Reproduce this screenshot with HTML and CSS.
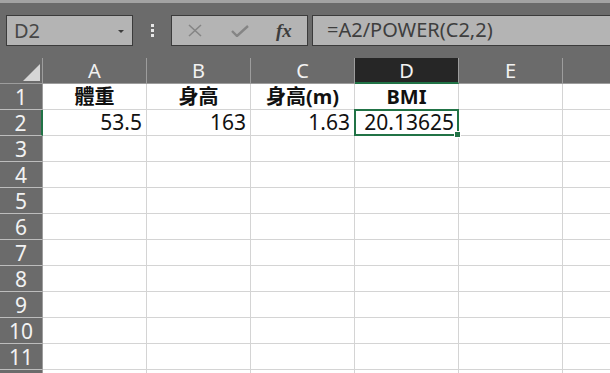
FILE: index.html
```html
<!DOCTYPE html>
<html lang="zh-Hant">
<head>
    <title>體重 BMI</title>
    <meta charset="utf-8">
    <meta name="viewport" content="width=device-width, initial-scale=1">
    <link rel="stylesheet" href="styles.css">
</head>
<body>
    <div class="toolbar">
        <div class="name-box">
            <span class="cell-ref">D2</span>
            <span class="drop-arrow"></span>
        </div>
        <div class="grip">
            <span></span><span></span><span></span>
        </div>
        <div class="fx-box">
            <svg class="tool-icon" width="14" height="13" viewBox="0 0 14 13">
                <path d="M1 1 L13 12 M13 1 L1 12" stroke="#858585" stroke-width="1.6" fill="none"/>
            </svg>
            <svg class="tool-icon" width="18" height="12" viewBox="0 0 18 12">
                <path d="M1 6 L6 11 L17 1" stroke="#858585" stroke-width="2.4" fill="none"/>
            </svg>
            <span class="fx">fx</span>
        </div>
        <div class="formula-bar">=A2/POWER(C2,2)</div>
    </div>

    <div class="sheet">
        <div class="corner"><span class="corner-mark"></span></div>
        <div class="col-head">A</div>
        <div class="col-head">B</div>
        <div class="col-head">C</div>
        <div class="col-head active">D</div>
        <div class="col-head">E</div>
        <div class="col-head last"></div>

        <div class="row-head">1</div>
        <div class="cell title">體重</div>
        <div class="cell title">身高</div>
        <div class="cell title">身高(m)</div>
        <div class="cell title">BMI</div>
        <div class="cell"></div>
        <div class="cell last"></div>

        <div class="row-head active">2</div>
        <div class="cell num">53.5</div>
        <div class="cell num">163</div>
        <div class="cell num">1.63</div>
        <div class="cell num selected">20.13625<span class="handle"></span></div>
        <div class="cell"></div>
        <div class="cell last"></div>
    </div>

    <script>
        // empty rows 3 .. 11, plus the top edge of the next row
        const sheet = document.querySelector('.sheet');
        for (let r = 3; r <= 12; r++) {
            let html = '<div class="row-head">' + (r < 12 ? r : '') + '</div>';
            for (let c = 0; c < 5; c++) {
                html += '<div class="cell"></div>';
            }
            html += '<div class="cell last"></div>';
            sheet.insertAdjacentHTML('beforeend', html);
        }
    </script>
</body>
</html>
```

FILE: styles.css
```css
html, body {
    margin: 0;
    padding: 0;
    overflow: hidden;
}
body {
    background-color: #6b6b6b;
    font-family: "Noto Sans", "Noto Sans CJK TC", sans-serif;
    width: 610px;
    height: 373px;
}
.toolbar {
    height: 58px;
    box-sizing: border-box;
    border-top: 3px solid #a3a3a3;
    padding: 12px 0 0 6px;
    display: flex;
    align-items: flex-start;
}
.name-box, .fx-box, .formula-bar {
    height: 31px;
    box-sizing: border-box;
    background-color: #b4b4b4;
    border: 1px solid #3b3b3b;
}
.name-box {
    width: 127px;
    display: flex;
    align-items: center;
    justify-content: space-between;
    padding: 0 8px 0 7px;
}
.cell-ref {
    color: #474747;
    font-size: 20px;
    line-height: 1;
}
.drop-arrow {
    width: 0;
    height: 0;
    border-left: 3px solid transparent;
    border-right: 3px solid transparent;
    border-top: 3px solid #3d3d3d;
    margin-top: 2px;
}
.grip {
    width: 38px;
    height: 31px;
    display: flex;
    flex-direction: column;
    align-items: center;
    justify-content: center;
    gap: 2px;
}
.grip span {
    width: 3px;
    height: 3px;
    background-color: #e6e6e6;
}
.fx-box {
    width: 137px;
    display: flex;
    align-items: center;
    padding: 0 0 0 16px;
}
.tool-icon {
    display: block;
}
.tool-icon + .tool-icon {
    margin-left: 29px;
}
.fx {
    margin-left: 27px;
    font-family: "Liberation Serif", serif;
    font-style: italic;
    font-weight: bold;
    font-size: 19px;
    color: #3d3d3d;
    line-height: 1;
}
.formula-bar {
    flex: 1;
    margin-left: 4px;
    border-right: none;
    padding-left: 14px;
    font-size: 20px;
    line-height: 28px;
    color: #3e3e3e;
}

.sheet {
    display: grid;
    grid-template-columns: 43px repeat(5, 104px) 1fr;
    grid-auto-rows: 26px;
}
.corner, .col-head, .row-head {
    background-color: #6b6b6b;
    color: #f2f2f2;
    box-sizing: border-box;
}
.corner {
    border-right: 1px solid #9d9d9d;
    border-bottom: 1px solid #9d9d9d;
    display: flex;
    justify-content: flex-end;
    align-items: flex-end;
    padding: 0 2px 2px 0;
}
.corner-mark {
    width: 0;
    height: 0;
    border-left: 17px solid transparent;
    border-bottom: 17px solid #d6d6d6;
}
.col-head {
    border-right: 1px solid #9d9d9d;
    border-bottom: 1px solid #9d9d9d;
    text-align: center;
    font-size: 20px;
    line-height: 26px;
}
.col-head.active {
    background-color: #262626;
    border-bottom: 2px solid #217346;
    line-height: 25px;
}
.col-head.last {
    border-right: none;
}
.row-head {
    border-right: 1px solid #9d9d9d;
    border-bottom: 1px solid #bdbdbd;
    text-align: center;
    font-size: 21px;
    line-height: 26px;
}
.row-head.active {
    border-right: 2px solid #217346;
}
.cell {
    background-color: #ffffff;
    border-right: 1px solid #d4d4d4;
    border-bottom: 1px solid #d4d4d4;
    box-sizing: border-box;
    color: #111111;
    font-size: 21px;
    line-height: 25px;
    white-space: nowrap;
}
.cell.last {
    border-right: none;
}
.title {
    text-align: center;
    font-weight: bold;
    font-size: 20px;
}
.num {
    text-align: right;
    padding-right: 4px;
}
.selected {
    position: relative;
}
.selected::after {
    content: "";
    position: absolute;
    left: -1px;
    top: -1px;
    right: -1px;
    bottom: -1px;
    border: 2px solid #217346;
}
.handle {
    position: absolute;
    right: -3px;
    bottom: -3px;
    width: 5px;
    height: 5px;
    background-color: #217346;
    border: 1px solid #ffffff;
    z-index: 1;
}
```
